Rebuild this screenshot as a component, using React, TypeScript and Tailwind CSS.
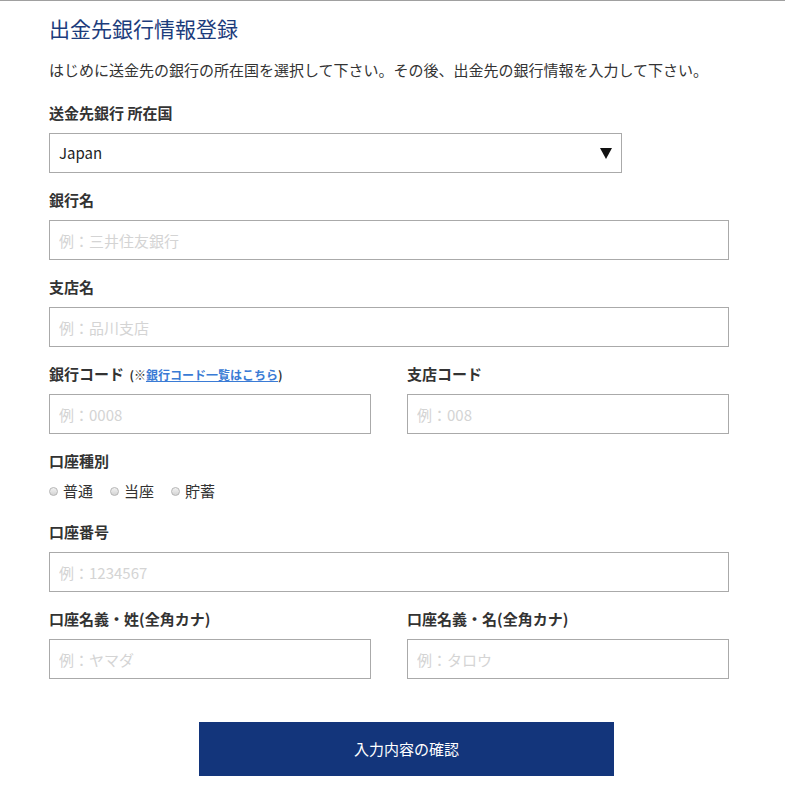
import React from "react";

const font = { fontFamily: '"Noto Sans CJK JP", "Noto Sans", sans-serif' };

function Label({ children, className = "" }: { children: React.ReactNode; className?: string }) {
  return (
    <div className={"h-[20px] leading-[20px] text-[15px] font-bold text-[#333] " + className}>{children}</div>
  );
}

function Input({ placeholder }: { placeholder: string }) {
  return (
    <input
      type="text"
      placeholder={placeholder}
      className="mt-[10px] block h-[40px] w-full border border-[#aaaaaa] bg-white px-[9px] text-[15px] text-[#333] outline-none placeholder:text-[#d4d4d4]"
    />
  );
}

function Radio({ label }: { label: string }) {
  return (
    <label className="flex items-center gap-[5px]">
      <span className="inline-block h-[9px] w-[9px] rounded-full border border-[#b5b5b5] bg-gradient-to-b from-[#f2f2f2] to-[#d4d4d4]" />
      <span className="text-[15px] leading-[20px] text-[#333]">{label}</span>
    </label>
  );
}

export default function App() {
  return (
    <div className="min-h-[793px] w-full border-t border-[#a0a0a0] bg-white" style={font}>
      <div className="ml-[49px] w-[680px]">
        <h1 className="mt-[12px] h-[30px] text-[21px] font-normal leading-[30px] text-[#1c3c7c]">出金先銀行情報登録</h1>
        <p className="mt-[15px] h-[24px] whitespace-nowrap text-[15px] leading-[24px] text-[#333]">
          はじめに送金先の銀行の所在国を選択して下さい。その後、出金先の銀行情報を入力して下さい。
        </p>

        <Label className="mt-[21px]">送金先銀行 所在国</Label>
        <div className="mt-[10px] flex h-[40px] w-[573px] items-center justify-between border border-[#aaaaaa] pl-[9px] pr-[9px]">
          <span className="text-[15px] text-[#222]">Japan</span>
          <svg width="12" height="11" viewBox="0 0 12 11">
            <polygon points="0,0 12,0 6,11" fill="#111" />
          </svg>
        </div>

        <Label className="mt-[17px]">銀行名</Label>
        <Input placeholder="例：三井住友銀行" />

        <Label className="mt-[17px]">支店名</Label>
        <Input placeholder="例：品川支店" />

        <div className="mt-[17px] grid grid-cols-2 gap-x-[36px]">
          <div>
            <Label>
              銀行コード{" "}
              <span className="ml-[2px] text-[12px] font-bold text-[#333]">
                (※<a href="#" className="text-[#3a7bd5] underline">銀行コード一覧はこちら</a>)
              </span>
            </Label>
            <Input placeholder="例：0008" />
          </div>
          <div>
            <Label>支店コード</Label>
            <Input placeholder="例：008" />
          </div>
        </div>

        <Label className="mt-[17px]">口座種別</Label>
        <div className="mt-[10px] flex h-[20px] items-center gap-[17px]">
          <Radio label="普通" />
          <Radio label="当座" />
          <Radio label="貯蓄" />
        </div>

        <Label className="mt-[21px]">口座番号</Label>
        <Input placeholder="例：1234567" />

        <div className="mt-[17px] grid grid-cols-2 gap-x-[36px]">
          <div>
            <Label>口座名義・姓(全角カナ)</Label>
            <Input placeholder="例：ヤマダ" />
          </div>
          <div>
            <Label>口座名義・名(全角カナ)</Label>
            <Input placeholder="例：タロウ" />
          </div>
        </div>

        <div className="mt-[43px] flex">
          <button className="ml-[150px] h-[54px] w-[415px] bg-[#13357b] text-[15px] text-white">入力内容の確認</button>
        </div>
      </div>
    </div>
  );
}
